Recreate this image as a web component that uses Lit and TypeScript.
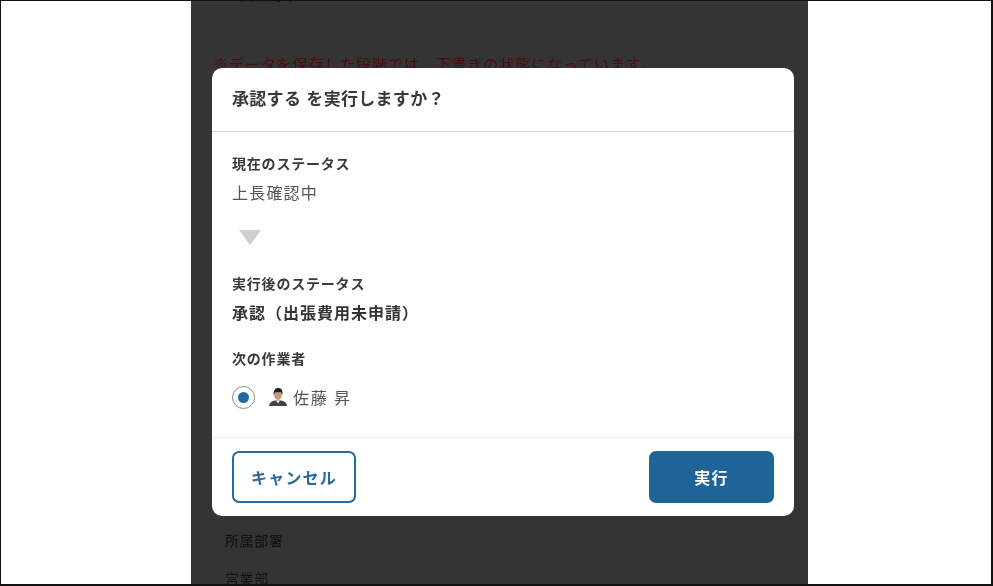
import { LitElement, html, css } from "lit";
import { customElement } from "lit/decorators.js";

@customElement("app-root")
export class AppRoot extends LitElement {
  static styles = css`
    :host {
      display: block;
      width: 993px;
      height: 586px;
      overflow: hidden;
      background: #fff;
      font-family: "Noto Sans CJK JP", "Noto Sans", sans-serif;
    }
    .frame {
      box-sizing: border-box;
      width: 993px;
      height: 586px;
      border: solid #111;
      border-width: 1px 2px 2px 1px;
      display: flex;
      padding-left: 190px;
    }
    .stage {
      position: relative;
      width: 617px;
      background: #343434;
      overflow: hidden;
      display: flex;
      flex-direction: column;
      filter: blur(0.7px);
    }
    .bg {
      flex: 1;
      display: flex;
      flex-direction: column;
      padding: 0 0 0 34px;
      color: #141414;
      font-size: 14px;
      letter-spacing: 0.6px;
      line-height: 20px;
    }
    .bg-top {
      margin-top: -17px;
      height: 20px;
    }
    .bg-warn {
      margin: 49px 0 0 -12px;
      color: #4c0c0c;
      font-size: 15px;
      letter-spacing: 0.9px;
      line-height: 22px;
    }
    .bg-spacer {
      flex: 1;
    }
    .bg-label {
      font-weight: 500;
      height: 38px;
    }
    .bg-value {
      height: 16px;
    }
    .modal {
      position: absolute;
      left: 21px;
      top: 67px;
      width: 582px;
      height: 448px;
      background: #fff;
      border-radius: 10px;
      display: flex;
      flex-direction: column;
      color: #333;
    }
    .head {
      height: 64px;
      box-sizing: border-box;
      border-bottom: 1px solid #d8d8d8;
      padding: 0 20px 4px;
      display: flex;
      align-items: center;
      font-size: 17px;
      font-weight: 700;
      letter-spacing: 0.3px;
      word-spacing: 1px;
      color: #3a3a3a;
    }
    .body {
      flex: 1;
      padding: 21px 20px 0;
      display: flex;
      flex-direction: column;
      align-items: flex-start;
    }
    .label {
      font-size: 14px;
      font-weight: 700;
      letter-spacing: 0.8px;
      line-height: 20px;
      color: #3a3a3a;
    }
    .value {
      font-size: 16px;
      line-height: 22px;
      margin-top: 8px;
      color: #555;
      letter-spacing: 1.2px;
    }
    .value.strong {
      font-weight: 700;
      color: #333;
      letter-spacing: 1px;
      margin-top: 8px;
    }
    .arrow {
      margin: 27px 0 0 7px;
      width: 0;
      height: 0;
      border-left: 11px solid transparent;
      border-right: 11px solid transparent;
      border-top: 15px solid #cfcfcf;
    }
    .after {
      margin-top: 28px;
    }
    .next {
      margin-top: 25px;
    }
    .assignee {
      display: flex;
      align-items: center;
      margin-top: 17px;
      font-size: 16px;
      letter-spacing: 1.8px;
      color: #555;
    }
    .radio {
      box-sizing: border-box;
      width: 23px;
      height: 23px;
      border-radius: 50%;
      border: 1px solid #8a8a8a;
      display: flex;
      align-items: center;
      justify-content: center;
    }
    .radio i {
      display: block;
      width: 11px;
      height: 11px;
      border-radius: 50%;
      background: #1f6aa5;
    }
    .avatar {
      width: 20px;
      height: 20px;
      margin: 0 5px 0 13px;
    }
    .foot {
      height: 79px;
      box-sizing: border-box;
      border-top: 1px solid #eeeeee;
      padding: 13px 20px 0;
      display: flex;
      justify-content: space-between;
      align-items: flex-start;
    }
    .btn {
      box-sizing: border-box;
      width: 124px;
      height: 52px;
      border-radius: 7px;
      font-family: inherit;
      font-size: 16px;
      font-weight: 700;
      letter-spacing: 1.2px;
      display: flex;
      align-items: center;
      justify-content: center;
      padding: 0;
      border: 2px solid #2a6a99;
    }
    .cancel {
      background: #fff;
      color: #2a6a99;
    }
    .run {
      width: 125px;
      background: #1f6496;
      border-color: #1f6496;
      color: #fff;
    }
  `;

  render() {
    return html`
      <div class="frame">
        <div class="stage">
          <div class="bg">
            <div class="bg-top">上長確認中？</div>
            <div class="bg-warn">※データを保存した段階では、下書きの状態になっています。</div>
            <div class="bg-spacer"></div>
            <div class="bg-label">所属部署</div>
            <div class="bg-value">営業部</div>
          </div>
          <div class="modal">
            <div class="head">承認する を実行しますか？</div>
            <div class="body">
              <div class="label">現在のステータス</div>
              <div class="value">上長確認中</div>
              <div class="arrow"></div>
              <div class="label after">実行後のステータス</div>
              <div class="value strong">承認（出張費用未申請）</div>
              <div class="label next">次の作業者</div>
              <div class="assignee">
                <span class="radio"><i></i></span>
                <svg class="avatar" viewBox="0 0 20 20">
                  <path d="M1 19c.4-3.400 3-4.800 6-5.400h6c3 .6 5.600 2 6 5.400z" fill="#3f444a" />
                  <path d="M8 13.500h4l-2 3z" fill="#e8e8e8" />
                  <ellipse cx="10" cy="8" rx="3.800" ry="5" fill="#c9977c" />
                  <path d="M5.800 8.500C4.800 3.500 7.400 1 10.400 1 13.800 1 15.200 4 14.200 8.500c-.4-2.200-1-3.300-2.200-3.500-1.600.5-3.800.4-4.800.2-.6.8-1.200 2-1.400 3.800z" fill="#231d1b" />
                </svg>
                <span>佐藤 昇</span>
              </div>
            </div>
            <div class="foot">
              <button class="btn cancel">キャンセル</button>
              <button class="btn run">実行</button>
            </div>
          </div>
        </div>
      </div>
    `;
  }
}
